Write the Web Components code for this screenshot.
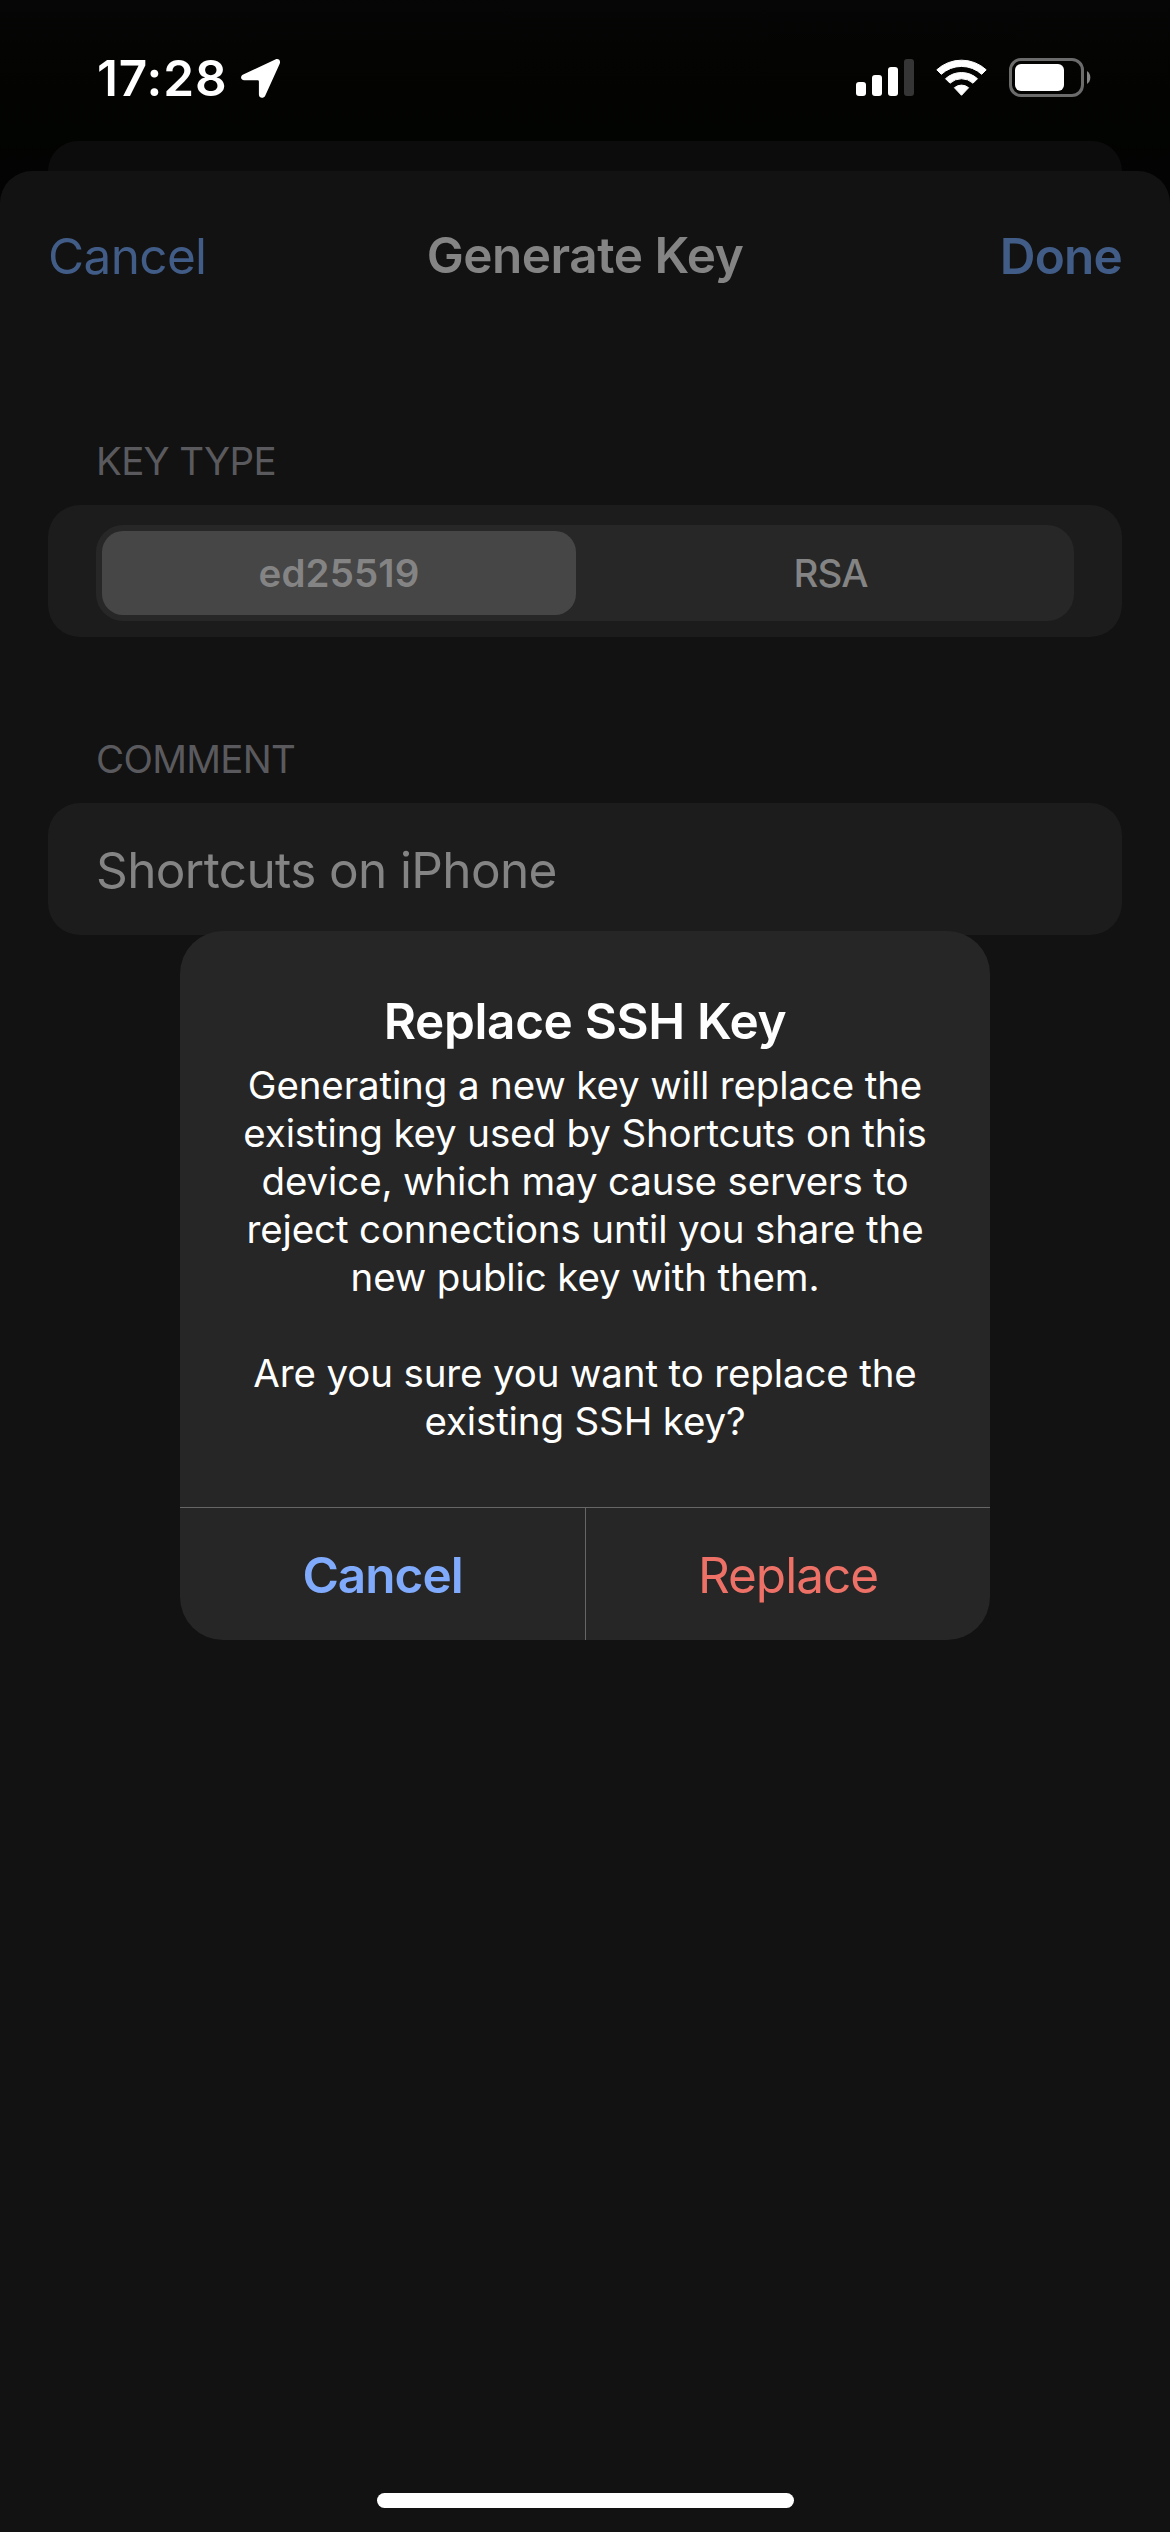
<!DOCTYPE html>
<html lang="en">
<head>
<meta charset="utf-8">
<title>Generate Key</title>
<style>
  html, body { margin: 0; padding: 0; background: #040403; }
  body { width: 1170px; height: 2532px; overflow: hidden; font-family: Inter, "Liberation Sans", sans-serif; color: #fff; }
</style>
</head>
<body>
<phone-screen>
  <status-bar time="17:28"></status-bar>
  <modal-sheet>
    <nav-header>
      <span slot="left">Cancel</span>
      <span slot="title">Generate Key</span>
      <span slot="right">Done</span>
    </nav-header>
    <form-section label="KEY TYPE">
      <segmented-control>
        <span slot="first">ed25519</span>
        <span slot="second">RSA</span>
      </segmented-control>
    </form-section>
    <form-section label="COMMENT" class="comment">
      <text-row>Shortcuts on iPhone</text-row>
    </form-section>
  </modal-sheet>
  <alert-dialog slot="overlay">
    <span slot="title">Replace SSH Key</span>
    <span slot="message">Generating a new key will replace the<br>existing key used by Shortcuts on this<br>device, which may cause servers to<br>reject connections until you share the<br>new public key with them.<br><br>Are you sure you want to replace the<br>existing SSH key?</span>
    <span slot="cancel">Cancel</span>
    <span slot="confirm">Replace</span>
  </alert-dialog>
  <home-indicator slot="overlay"></home-indicator>
</phone-screen>

<script>
const define = (name, html, setup) => customElements.define(name, class extends HTMLElement {
  constructor() {
    super();
    this.attachShadow({ mode: 'open' }).innerHTML = html;
  }
  connectedCallback() { if (setup) setup(this, this.shadowRoot); }
});

define('phone-screen', `
<style>
  :host { display: flex; flex-direction: column; position: relative; width: 1170px; height: 2532px; overflow: hidden; background: linear-gradient(#060606 0, #040403 50px, #020401 140px, #030303 171px); }
</style>
<slot></slot><slot name="overlay"></slot>`);

define('status-bar', `
<style>
  :host { display: flex; box-sizing: border-box; height: 141px; flex: none; padding: 48px 78px 33px 97px; justify-content: space-between; align-items: flex-start; }
  .time { font-size: 49.5px; line-height: 60px; font-weight: 600; letter-spacing: 0.9px; }
  .left { display: flex; gap: 12px; }
  .right { display: flex; gap: 22px; }
  svg { display: block; margin-top: 9px; }
</style>
<div class="left">
  <span class="time"></span>
  <svg width="41" height="42" viewBox="240 57 41 42"><path fill="#fff" d="M243.2 74.6 L275.3 59.4 C278.5 58 281 60.4 279.7 63.7 L265.2 95.8 C263.6 99 258.9 98.400 258.9 94.600 V81.400 Q258.900 80.300 257.800 80.300 H244.300 C240.500 80.300 239.900 76.200 243.200 74.600 Z"/></svg>
</div>
<div class="right">
  <svg width="58" height="40" viewBox="856 57 58 40"><g fill="#fff"><rect x="856" y="82" width="10" height="14" rx="3"/><rect x="872" y="75" width="10" height="21" rx="3"/><rect x="888" y="67" width="10" height="29" rx="3"/><rect x="904" y="59" width="10" height="37" rx="3" fill="#353535"/></g></svg>
  <svg width="51" height="40" viewBox="936 57 51 40"><g fill="#fff" stroke="#fff" stroke-width="1" stroke-linejoin="round"><path d="M936.800 69.800 A36.500 36.500 0 0 1 986.200 69.800 L981.700 74.300 A29.800 29.800 0 0 0 941.300 74.300 Z"/><path d="M945.500 78.700 A23.800 23.800 0 0 1 977.500 78.700 L973 83.200 A17 17 0 0 0 950 83.200 Z"/><path d="M954.400 87.700 A11 11 0 0 1 968.600 87.700 L961.500 95.300 Z"/></g></svg>
  <svg width="83" height="41" viewBox="1009 57 83 41"><rect x="1010.500" y="59.500" width="72" height="36" rx="10.500" fill="none" stroke="#6b6b6b" stroke-width="3"/><rect x="1015" y="64" width="49" height="27" rx="6" fill="#fff"/><path d="M1087 71 A8 8 0 0 1 1087 84 Z" fill="#858585"/></svg>
</div>`, (el, root) => { root.querySelector('.time').textContent = el.getAttribute('time'); });

define('modal-sheet', `
<style>
  :host { display: flex; flex-direction: column; flex: 1; }
  .back { height: 30px; margin: 0 48px; flex: none; background: #0c0c0c; border-radius: 30px 30px 0 0; }
  .front { flex: 1; background: #121212; border-radius: 32px 32px 0 0; display: flex; flex-direction: column; }
</style>
<div class="back"></div>
<div class="front"><slot></slot></div>`);

define('nav-header', `
<style>
  :host { display: grid; grid-template-columns: 1fr auto 1fr; align-items: center; height: 170px; padding: 0 48px; font-size: 49.5px; line-height: 60px; color: #415c86; }
  .title { color: #848484; font-weight: 600; padding-bottom: 2px; letter-spacing: -0.5px; }
  .left { letter-spacing: -0.65px; }
  .right { text-align: right; font-weight: 600; letter-spacing: -0.8px; }
</style>
<div class="left"><slot name="left"></slot></div>
<div class="title"><slot name="title"></slot></div>
<div class="right"><slot name="right"></slot></div>`);

define('form-section', `
<style>
  :host { display: block; padding: 96px 48px 0; }
  :host(.comment) { padding-top: 98px; }
  .label { margin: 0 0 20px 48px; font-size: 38.5px; line-height: 48px; color: #5a5a5e; letter-spacing: -0.7px; }
  .card { display: flex; box-sizing: border-box; height: 132px; border-radius: 32px; background: #1c1c1c; }
</style>
<div class="label"></div>
<div class="card"><slot></slot></div>`, (el, root) => { root.querySelector('.label').textContent = el.getAttribute('label'); });

define('segmented-control', `
<style>
  :host { display: flex; box-sizing: border-box; flex: 1; height: 96px; margin: 20px 48px 0; padding: 6px; border-radius: 27px; background: #272727; color: #848484; font-size: 38.5px; line-height: 84px; text-align: center; }
  div { flex: none; height: 84px; box-sizing: border-box; }
  .on { width: 474px; border-radius: 21px; background: #464647; font-weight: 600; letter-spacing: 0.1px; }
  .off { width: 486px; padding-left: 23px; font-weight: 500; letter-spacing: -0.9px; }
</style>
<div class="on"><slot name="first"></slot></div>
<div class="off"><slot name="second"></slot></div>`);

define('text-row', `
<style>
  :host { display: block; padding-left: 48px; font-size: 49.5px; line-height: 134px; color: #848484; letter-spacing: -0.62px; }
</style>
<slot></slot>`);

define('alert-dialog', `
<style>
  :host { position: absolute; left: 180px; top: 931px; width: 810px; height: 709px; display: flex; flex-direction: column; border-radius: 43px; overflow: hidden; background: #262626; text-align: center; }
  .body { height: 576px; box-sizing: border-box; padding-top: 60px; flex: none; }
  .title { font-size: 49.5px; line-height: 60px; font-weight: 600; letter-spacing: -0.35px; }
  .message { margin-top: 10px; font-size: 38.5px; line-height: 48px; letter-spacing: -0.14px; }
  .actions { display: flex; height: 132px; border-top: 1px solid #666; font-size: 49.5px; line-height: 134px; letter-spacing: -1px; }
  .cancel { width: 405px; font-weight: 600; color: #80aafb; }
  .confirm { flex: 1; border-left: 1px solid #666; color: #ee7167; }
</style>
<div class="body">
  <div class="title"><slot name="title"></slot></div>
  <div class="message"><slot name="message"></slot></div>
</div>
<div class="actions">
  <div class="cancel"><slot name="cancel"></slot></div>
  <div class="confirm"><slot name="confirm"></slot></div>
</div>`);

define('home-indicator', `
<style>
  :host { position: absolute; left: 377px; bottom: 24px; width: 417px; height: 15px; border-radius: 8px; background: #fff; }
</style>`);
</script>
</body>
</html>
